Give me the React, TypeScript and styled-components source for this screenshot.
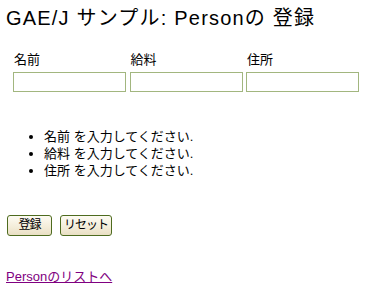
import React, { useState } from "react";
import styled, { createGlobalStyle } from "styled-components";

const GlobalStyle = createGlobalStyle`
  html, body {
    margin: 0;
    padding: 0;
    background: #ffffff;
  }
  body {
    font-family: "Liberation Sans", "Noto Sans CJK JP", sans-serif;
    font-size: 13px;
    color: #000000;
  }
`;

const fields = [
  { key: "name", label: "名前" },
  { key: "salary", label: "給料" },
  { key: "address", label: "住所" },
];

function App() {
  const [values, setValues] = useState<Record<string, string>>({
    name: "",
    salary: "",
    address: "",
  });

  return (
    <Page>
      <GlobalStyle />
      <Title>GAE/J サンプル: Personの 登録</Title>

      <FieldRow>
        {fields.map((f) => (
          <Field key={f.key}>
            <Label>{f.label}</Label>
            <TextInput
              type="text"
              value={values[f.key]}
              onChange={(e) => setValues({ ...values, [f.key]: e.target.value })}
            />
          </Field>
        ))}
      </FieldRow>

      <ErrorList>
        {fields.map((f) => (
          <li key={f.key}>{f.label} を入力してください.</li>
        ))}
      </ErrorList>

      <ButtonRow>
        <FormButton type="submit" $width={45}>登録</FormButton>
        <FormButton type="reset" $width={52}>リセット</FormButton>
      </ButtonRow>

      <ListLink href="#">Personのリストへ</ListLink>
    </Page>
  );
}

const Page = styled.div`
  padding: 5px 6px 0 6px;
`;

const Title = styled.h1`
  margin: 0;
  font-size: 20px;
  font-weight: normal;
  letter-spacing: 1.2px;
  line-height: 26px;
`;

const FieldRow = styled.div`
  display: grid;
  grid-template-columns: repeat(3, 116.5px);
  margin: 20px 0 0 7px;
`;

const Field = styled.div`
  display: flex;
  flex-direction: column;
`;

const Label = styled.span`
  padding-left: 1px;
  line-height: 17px;
  margin-bottom: 4px;
`;

const TextInput = styled.input`
  box-sizing: border-box;
  width: 113px;
  height: 20px;
  margin: 0;
  padding: 1px 3px;
  border: 1px solid #a2b67f;
  background: #ffffff;
  font: inherit;
  outline: none;
`;

const ErrorList = styled.ul`
  margin: 36px 0 0 0;
  padding-left: 38px;
  line-height: 17px;
  list-style: disc;
`;

const ButtonRow = styled.div`
  display: flex;
  gap: 8px;
  margin: 36px 0 0 1px;
`;

const FormButton = styled.button<{ $width: number }>`
  box-sizing: border-box;
  width: ${(p) => p.$width}px;
  height: 21px;
  padding: 0;
  border: 1px solid #4e6b1f;
  border-radius: 3px;
  background: linear-gradient(#fdfbf3, #f3ecd8 60%, #e9dfc4);
  font-family: "Liberation Sans", "Noto Sans CJK JP", sans-serif;
  font-size: 12px;
  letter-spacing: -1px;
  color: #000000;
  line-height: 17px;
  white-space: nowrap;
`;

const ListLink = styled.a`
  display: inline-block;
  margin-top: 32px;
  color: #800080;
  text-decoration: underline;
  line-height: 17px;
`;

export default App;
